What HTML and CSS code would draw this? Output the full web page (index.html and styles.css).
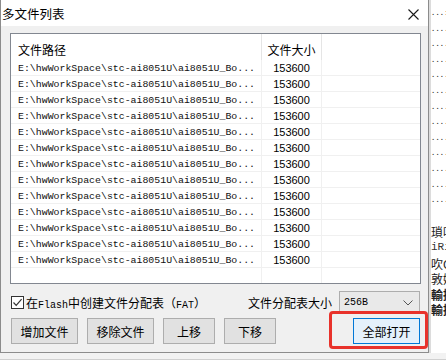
FILE: index.html
```html
<!DOCTYPE html>
<html>
<head>
  <link rel="stylesheet" href="styles.css">
</head>
<body>
  <div class="desk">
    <div class="dlg">
      <div class="titlebar">
        <span class="title">多文件列表</span>
        <svg class="close" width="11" height="11" viewBox="0 0 11 11">
          <path d="M0.5 0.5 L10.5 10.5 M10.5 0.5 L0.5 10.5" stroke="#1a1a1a" stroke-width="1.1" fill="none"/>
        </svg>
      </div>
      <div class="client">
        <div class="list">
          <div class="head">
            <div class="c-path">文件路径</div>
            <div class="c-size">文件大小</div>
            <div class="c-rest"></div>
          </div>
          <div class="row"><div class="c-path">E:\hwWorkSpace\stc-ai8051U\ai8051U_Bo...</div><div class="c-size">153600</div><div class="c-rest"></div></div>
          <div class="row"><div class="c-path">E:\hwWorkSpace\stc-ai8051U\ai8051U_Bo...</div><div class="c-size">153600</div><div class="c-rest"></div></div>
          <div class="row"><div class="c-path">E:\hwWorkSpace\stc-ai8051U\ai8051U_Bo...</div><div class="c-size">153600</div><div class="c-rest"></div></div>
          <div class="row"><div class="c-path">E:\hwWorkSpace\stc-ai8051U\ai8051U_Bo...</div><div class="c-size">153600</div><div class="c-rest"></div></div>
          <div class="row"><div class="c-path">E:\hwWorkSpace\stc-ai8051U\ai8051U_Bo...</div><div class="c-size">153600</div><div class="c-rest"></div></div>
          <div class="row"><div class="c-path">E:\hwWorkSpace\stc-ai8051U\ai8051U_Bo...</div><div class="c-size">153600</div><div class="c-rest"></div></div>
          <div class="row"><div class="c-path">E:\hwWorkSpace\stc-ai8051U\ai8051U_Bo...</div><div class="c-size">153600</div><div class="c-rest"></div></div>
          <div class="row"><div class="c-path">E:\hwWorkSpace\stc-ai8051U\ai8051U_Bo...</div><div class="c-size">153600</div><div class="c-rest"></div></div>
          <div class="row"><div class="c-path">E:\hwWorkSpace\stc-ai8051U\ai8051U_Bo...</div><div class="c-size">153600</div><div class="c-rest"></div></div>
          <div class="row"><div class="c-path">E:\hwWorkSpace\stc-ai8051U\ai8051U_Bo...</div><div class="c-size">153600</div><div class="c-rest"></div></div>
          <div class="row"><div class="c-path">E:\hwWorkSpace\stc-ai8051U\ai8051U_Bo...</div><div class="c-size">153600</div><div class="c-rest"></div></div>
          <div class="row"><div class="c-path">E:\hwWorkSpace\stc-ai8051U\ai8051U_Bo...</div><div class="c-size">153600</div><div class="c-rest"></div></div>
          <div class="row"><div class="c-path">E:\hwWorkSpace\stc-ai8051U\ai8051U_Bo...</div><div class="c-size">153600</div><div class="c-rest"></div></div>
          <div class="filler"><div class="c-path"></div><div class="c-size"></div><div class="c-rest"></div></div>
        </div>

        <div class="opts">
          <label class="check">
            <span class="box">
              <svg width="11" height="11" viewBox="0 0 11 11">
                <path d="M1.5 5.5 L4.2 8.3 L9.6 2.2" stroke="#333" stroke-width="1.2" fill="none"/>
              </svg>
            </span>
            <span>在<span class="lat">Flash</span>中创建文件分配表（<span class="lat">FAT</span>）</span>
          </label>
          <span class="fat-label">文件分配表大小</span>
          <div class="combo">
            <span class="lat">256B</span>
            <svg width="10" height="6" viewBox="0 0 10 6">
              <path d="M0.5 0.5 L5 5 L9.5 0.5" stroke="#555" stroke-width="1" fill="none"/>
            </svg>
          </div>
        </div>

        <div class="btns">
          <button class="btn wide">增加文件</button>
          <button class="btn wide">移除文件</button>
          <button class="btn">上移</button>
          <button class="btn">下移</button>
          <button class="btn wide default">全部打开</button>
        </div>
      </div>
      <!-- red annotation around the open-all button -->
      <div class="mark"></div>
    </div>
    <div class="behind">
      <div class="dots">...:</div>
      <div class="dots">....</div>
      <div class="dots">....</div>
      <div class="dots">....</div>
      <div class="dots">....</div>
      <div class="dots">....</div>
      <div class="dots">....</div>
      <div class="dots">....</div>
      <div class="dots">....</div>
      <div class="dots">....</div>
      <div class="dots">....</div>
      <div class="dots">....</div>
      <div class="dots">....</div>
      <div>&nbsp;</div>
      <div class="cjk">瑣吋</div>
      <div>iRi</div>
      <div class="cjk">吹C</div>
      <div class="cjk">敦婭</div>
      <div class="cjk bold">輸據</div>
      <div class="cjk bold">輸據</div>
    </div>
  </div>
  <div class="strip"></div>
</body>
</html>
```

FILE: styles.css
```css
body {
  margin: 0;
  width: 446px;
  height: 360px;
  overflow: hidden;
  background: #f2f2f2;
  font-family: "Noto Sans CJK SC", sans-serif;
  font-size: 12px;
  color: #000;
}
.desk {
  display: flex;
  height: 353px;
}
.dlg {
  position: relative;
  width: 429px;
  height: 353px;
  box-sizing: border-box;
  border: 1px solid #8c8c8c;
  border-top: none;
  background: #f0f0f0;
  display: flex;
  flex-direction: column;
}
.titlebar {
  height: 26px;
  background: #fff;
  display: flex;
  align-items: center;
  padding-left: 1px;
  padding-right: 9px;
}
.title {
  font-size: 12.5px;
  line-height: 16px;
  margin-top: 1px;
}
.close {
  margin-left: auto;
  margin-top: 2px;
}
.client {
  flex: 1;
  padding: 7px 7px 0 9px;
  display: flex;
  flex-direction: column;
}

/* file list */
.list {
  width: 411px;
  height: 251px;
  box-sizing: border-box;
  border: 1px solid #828790;
  background: #fff;
  display: flex;
  flex-direction: column;
}
.head, .row, .filler {
  display: flex;
}
.head {
  height: 26px;
}
.head > div {
  display: flex;
  align-items: flex-end;
  padding-bottom: 2px;
  line-height: 16px;
  border-right: 1px solid #e5e5e5;
}
.row {
  height: 16px;
  box-sizing: border-box;
  border-bottom: 1px solid #f0f0f0;
}
.row > div {
  line-height: 17px;
  border-right: 1px solid #f0f0f0;
  white-space: nowrap;
  overflow: hidden;
}
.filler {
  flex: 1;
}
.filler > div {
  border-right: 1px solid #f0f0f0;
}
.c-path {
  width: 251px;
  box-sizing: border-box;
  padding-left: 7px;
}
.c-size {
  width: 60px;
  box-sizing: border-box;
  justify-content: center;
}
.c-rest {
  flex: 1;
  border-right: none !important;
}
.row .c-path {
  font-family: "Liberation Mono", monospace;
  font-size: 9.9px;
  color: #111;
}
.row .c-size {
  font-family: "Liberation Sans", sans-serif;
  font-size: 11px;
  text-align: center;
}

/* options row */
.opts {
  display: flex;
  align-items: center;
  height: 23px;
  margin-top: 7px;
}
.check {
  display: flex;
  align-items: center;
  gap: 2px;
}
.box {
  width: 13px;
  height: 13px;
  box-sizing: border-box;
  border: 1px solid #333;
  background: #fff;
  display: flex;
  align-items: center;
  justify-content: center;
  margin-left: 1px;
}
.lat {
  font-family: "Liberation Mono", monospace;
  font-size: 10px;
}
.fat-label {
  margin-left: auto;
  margin-right: 7px;
}
.combo {
  width: 81px;
  height: 23px;
  box-sizing: border-box;
  border: 1px solid #adadad;
  background: #e9e9e9;
  display: flex;
  align-items: center;
  justify-content: space-between;
  padding: 0 6px 0 4px;
  margin-right: 1px;
  line-height: 14px;
}

/* buttons */
.btns {
  display: flex;
  gap: 9px;
  margin-top: 4px;
  padding-left: 1px;
  padding-right: 1px;
}
.btn {
  height: 26px;
  width: 52px;
  border: 1px solid #adadad;
  background: #e1e1e1;
  font-family: "Noto Sans CJK SC", sans-serif;
  font-size: 12px;
  padding: 0;
  color: #000;
}
.btn.wide {
  width: 67px;
}
.btn.default {
  margin-left: auto;
  border-color: #0078d7;
  background: #e5f1fb;
}
.mark {
  position: absolute;
  left: 328px;
  top: 311px;
  width: 99px;
  height: 38px;
  box-sizing: border-box;
  border: 3px solid #e8322b;
  border-radius: 4px;
}

/* the editor window behind */
.behind {
  flex: 1;
  overflow: hidden;
  background: #fff;
  border-left: 2px solid #dcdcdc;
  padding-top: 6px;
  font-family: "Liberation Mono", monospace;
  font-size: 11px;
  line-height: 15.6px;
  white-space: nowrap;
  color: #333;
}
.behind .dots {
  font-size: 7px;
  font-weight: bold;
  letter-spacing: 0.2px;
}
.behind .cjk {
  font-family: "Noto Sans CJK TC", sans-serif;
  font-size: 12px;
  color: #222;
}
.behind .bold {
  font-weight: bold;
}
.strip {
  height: 7px;
  border-bottom: 1px solid #d0d0d0;
  box-sizing: border-box;
}
```
